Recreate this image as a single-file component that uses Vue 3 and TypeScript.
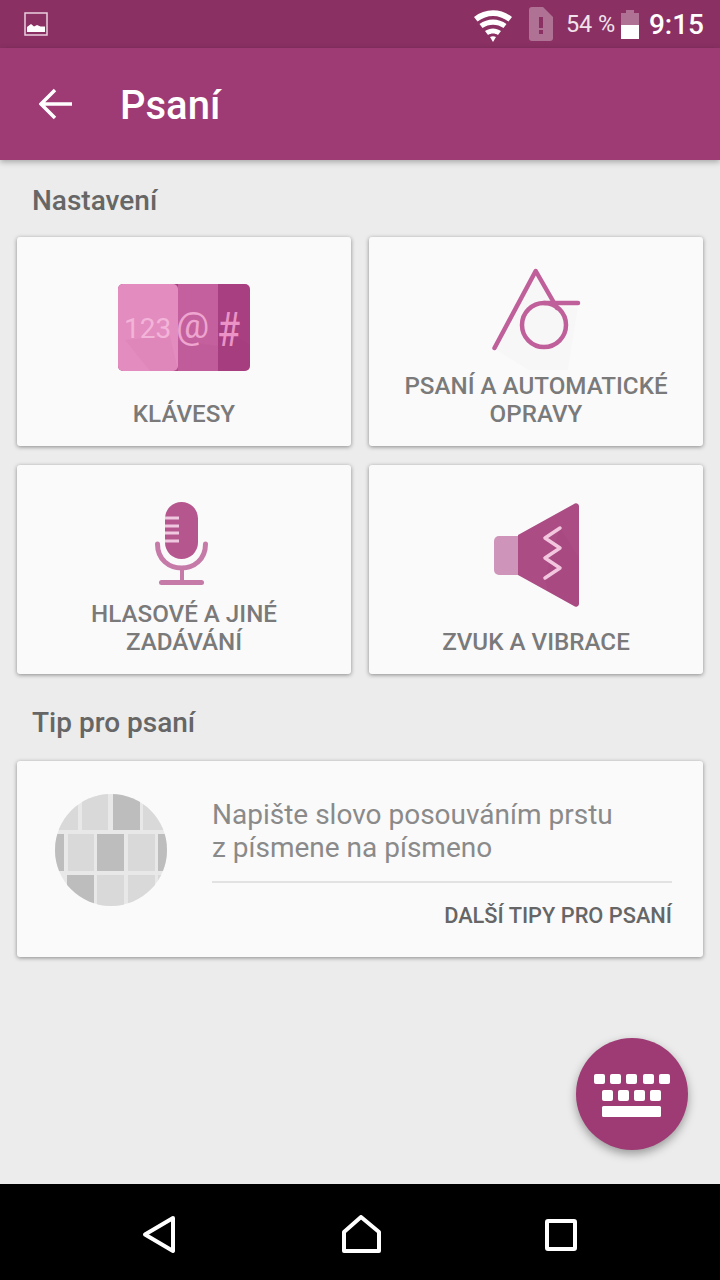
<script setup lang="ts">
const keyRow1 = [594, 610, 626, 643, 659]
const keyRow2 = [602, 618, 634, 650]
const micBars = [518, 526, 533, 541]

// tiles of the tip picture: x, y, width, height, dark
const tiles: [number, number, number, number, boolean][] = [
  [55, 793, 23, 37, false],
  [82, 793, 26, 37, false],
  [113, 793, 27, 37, true],
  [143, 793, 25, 37, false],
  [55, 834, 9, 37, true],
  [68, 834, 26, 37, false],
  [97, 834, 27, 37, true],
  [128, 834, 27, 37, false],
  [158, 834, 9, 37, true],
  [67, 875, 27, 31, true],
  [97, 875, 27, 31, false],
  [128, 875, 27, 31, false],
  [158, 875, 9, 31, false],
]
</script>

<template>
  <div class="screen">
    <div class="status-bar">
      <svg class="status-pic" viewBox="0 0 24 24">
        <rect x="1" y="1" width="22" height="22" fill="none" stroke="#e9cfdf" stroke-width="1.500" />
        <path d="M3 20v-5l4-3 3 2.500 3-1.500 3.500 1.500 4.500 0V20z" fill="#fff" />
      </svg>
      <span class="status-gap"></span>
      <svg class="status-wifi" viewBox="0 0 38 32">
        <path d="M0 7C11-2 27-2 38 7l-3.500 4.500C25 4 13 4 3.500 11.500z" fill="#fff" />
        <path d="M5.500 14c8-6 19-6 27 0l-3 4c-6-4.500-15-4.500-21 0z" fill="#fff" />
        <path d="M11 21c5-3.500 11-3.500 16 0l-3 4c-3-2-7-2-10 0z" fill="#fff" />
        <path d="M16 27c2-1 4-1 6 0L19 32z" fill="#fff" />
      </svg>
      <svg class="status-sim" viewBox="0 0 24 34">
        <path d="M3 0h11l10 10v21a3 3 0 0 1-3 3H3a3 3 0 0 1-3-3V3a3 3 0 0 1 3-3z" fill="#fff" fill-opacity="0.32" />
        <rect x="10" y="10" width="4" height="11" fill="#8a3063" />
        <rect x="10" y="23" width="4" height="4" fill="#8a3063" />
      </svg>
      <span class="status-pct">54 %</span>
      <svg class="status-battery" viewBox="0 0 18 29">
        <path d="M5 0h8v3h5v12H0V3h5z" fill="#fff" fill-opacity="0.32" />
        <rect y="15" width="18" height="14" fill="#fff" />
      </svg>
      <span class="status-time">9:15</span>
    </div>

    <header class="toolbar">
      <svg class="back" viewBox="0 0 34 32">
        <path d="M33 16H3M16 2L2 16l14 14" fill="none" stroke="#fff" stroke-width="3.500" />
      </svg>
      <h1>Psaní</h1>
    </header>

    <main class="content">
      <h2 class="first">Nastavení</h2>
      <div class="grid">
        <div class="card">
          <svg class="icon" viewBox="17 237 334 135">
            <rect x="118" y="284" width="132" height="87" rx="5" fill="#a83f80" />
            <path d="M178 284h40v87h-40z" fill="#c4609d" />
            <path d="M218 325l32 20v21a5 5 0 0 1-5 5h-27z" fill="#9a3574" fill-opacity="0.12" />
            <path d="M178 340l-36 0 32 31h44v-25z" fill="#b85292" fill-opacity="0.2" />
            <rect x="118" y="284" width="60" height="87" rx="5" fill="#e38cbf" />
            <path d="M125 340l45-4 8 35h-28z" fill="#c76aa6" fill-opacity="0.14" />
            <text x="124" y="338" class="k123">123</text>
            <text x="176" y="338" class="kat">@</text>
            <text x="217" y="346" class="khash" transform="translate(217 346) scale(0.78 1) translate(-217 -346)">#</text>
          </svg>
          <div class="label">KLÁVESY</div>
        </div>

        <div class="card">
          <svg class="icon" viewBox="369 237 334 135">
            <path d="M496 350l32 20h40l10-62-24-3-19-33z" fill="#000" fill-opacity="0.012" />
            <path d="M494.500 348L535.700 271 557 308" fill="none" stroke="#c0609b" stroke-width="4.500" stroke-linecap="round" stroke-linejoin="round" />
            <circle cx="544" cy="325" r="22" fill="none" stroke="#c0609b" stroke-width="4.500" />
            <path d="M544 303h34" fill="none" stroke="#c0609b" stroke-width="4.500" stroke-linecap="round" />
          </svg>
          <div class="label">PSANÍ A AUTOMATICKÉ<br />OPRAVY</div>
        </div>

        <div class="card">
          <svg class="icon" viewBox="17 465 334 135">
            <rect x="165" y="502" width="33" height="57" rx="16.500" fill="#b5568f" />
            <rect v-for="y in micBars" :key="y" x="165" :y="y - 1.500" width="14" height="3" fill="#f0c8df" />
            <path d="M157.500 544c0 32 48 32 48 0" fill="none" stroke="#c67aa8" stroke-width="5" stroke-linecap="round" />
            <rect x="180" y="568" width="4" height="14" fill="#c67aa8" />
            <rect x="159" y="580" width="45" height="5" rx="2.500" fill="#c67aa8" />
          </svg>
          <div class="label">HLASOVÉ A JINÉ<br />ZADÁVÁNÍ</div>
        </div>

        <div class="card">
          <svg class="icon" viewBox="369 465 334 135">
            <rect x="494" y="536" width="30" height="39" rx="5" fill="#cf94b9" />
            <path d="M518 535l56-31a3 3 0 0 1 5 2v98a3 3 0 0 1-5 2l-56-31z" fill="#ab4c85" />
            <path d="M560 528l19 30v46a3 3 0 0 1-5 2l-26-15-3-13z" fill="#8f2f6a" fill-opacity="0.1" />
            <path d="M560 528l-15 10 15 10-15 10 15 10-15 10" fill="none" stroke="#f2c6de" stroke-width="3.500" stroke-linecap="round" stroke-linejoin="round" />
          </svg>
          <div class="label">ZVUK A VIBRACE</div>
        </div>
      </div>

      <h2 class="second">Tip pro psaní</h2>
      <div class="card tip">
        <svg class="tip-pic" viewBox="55 794 112 112">
          <defs>
            <clipPath id="tipClip"><circle cx="111" cy="850" r="56" /></clipPath>
          </defs>
          <g clip-path="url(#tipClip)">
            <rect x="55" y="794" width="112" height="112" fill="#e8e8e8" />
            <rect
              v-for="(t, i) in tiles"
              :key="i"
              :x="t[0]"
              :y="t[1]"
              :width="t[2]"
              :height="t[3]"
              :fill="t[4] ? '#bdbdbd' : '#d9d9d9'"
            />
          </g>
        </svg>
        <div class="tip-body">
          <p>Napište slovo posouváním prstu<br />z písmene na písmeno</p>
          <div class="tip-more">DALŠÍ TIPY PRO PSANÍ</div>
        </div>
      </div>

      <div class="fab">
        <svg viewBox="576 1038 112 112">
          <rect v-for="x in keyRow1" :key="x" :x="x" y="1074" width="11" height="10" rx="2" fill="#fff" />
          <rect v-for="x in keyRow2" :key="x" :x="x" y="1090" width="11" height="11" rx="2" fill="#fff" />
          <rect x="602" y="1106" width="59" height="11" rx="1.500" fill="#fff" />
        </svg>
      </div>
    </main>

    <nav class="nav-bar">
      <svg class="nav-back" viewBox="0 0 36 40">
        <path d="M31 3L3 19.500 31 36z" fill="none" stroke="#fff" stroke-width="4" stroke-linejoin="round" />
      </svg>
      <svg class="nav-home" viewBox="0 0 40 38">
        <path d="M19 2L37 17v19H2V17z" fill="none" stroke="#fff" stroke-width="4" stroke-linejoin="round" />
      </svg>
      <svg class="nav-recent" viewBox="0 0 32 32">
        <rect x="2" y="2" width="28" height="28" rx="1" fill="none" stroke="#fff" stroke-width="4" />
      </svg>
    </nav>
  </div>
</template>

<style scoped>
.screen {
  width: 720px;
  height: 1280px;
  display: flex;
  flex-direction: column;
  background: #ececec;
  font-family: Roboto, "Liberation Sans", sans-serif;
  overflow: hidden;
}

.status-bar {
  height: 48px;
  flex: none;
  display: flex;
  align-items: center;
  padding: 0 16px 0 24px;
  background: #8a3063;
  color: #fff;
}

.status-pic {
  width: 24px;
  height: 24px;
}

.status-gap {
  flex: 1;
}

.status-wifi {
  width: 38px;
  height: 32px;
  margin: 4px 17px 0 0;
}

.status-sim {
  width: 24px;
  height: 34px;
  margin-right: 13px;
}

.status-pct {
  width: 55px;
  font-size: 23.500px;
  color: #f1e2eb;
}

.status-battery {
  width: 18px;
  height: 29px;
  margin-right: 10px;
}

.status-time {
  font-size: 28px;
  font-weight: 500;
}

.toolbar {
  height: 112px;
  flex: none;
  display: flex;
  align-items: center;
  padding: 0 0 0 39px;
  background: #9e3a74;
  box-shadow: 0 2px 6px rgba(0, 0, 0, 0.3);
  position: relative;
  z-index: 1;
  color: #fff;
}

.back {
  width: 34px;
  height: 32px;
}

.toolbar h1 {
  margin: 4px 0 0 47px;
  font-size: 40px;
  font-weight: 500;
  line-height: 108px;
}

.content {
  flex: 1;
  position: relative;
  padding: 0 17px;
}

h2 {
  margin: 0;
  padding-left: 15px;
  font-size: 28px;
  font-weight: 500;
  line-height: 32px;
  color: #666;
}

h2.first {
  padding-top: 25px;
  padding-bottom: 20px;
}

h2.second {
  padding-top: 33px;
  padding-bottom: 22px;
}

.grid {
  display: grid;
  grid-template-columns: 334px 334px;
  grid-auto-rows: 209px;
  column-gap: 18px;
  row-gap: 19px;
}

.card {
  display: flex;
  flex-direction: column;
  background: #fafafa;
  border-radius: 3px;
  box-shadow: 0 1px 4px rgba(0, 0, 0, 0.42);
}

.icon {
  width: 334px;
  height: 135px;
  overflow: visible;
  flex: none;
}

.label {
  margin-top: auto;
  padding-bottom: 18px;
  text-align: center;
  font-size: 24.200px;
  font-weight: 500;
  line-height: 28px;
  color: #7a7a7a;
}

.k123 {
  font-size: 28px;
  fill: #f3b4d9;
  font-family: Roboto, sans-serif;
}

.kat {
  font-size: 37px;
  fill: #eea5cf;
  font-family: Roboto, sans-serif;
}

.khash {
  font-size: 48px;
  fill: #eb93c6;
  font-family: Roboto, sans-serif;
}

.tip {
  flex-direction: row;
  height: 196px;
  padding: 33px 31px 0 38px;
  box-sizing: border-box;
}

.tip-pic {
  width: 112px;
  height: 112px;
  flex: none;
}

.tip-body {
  margin-left: 45px;
  flex: 1;
}

.tip-body p {
  margin: 4px 0 0;
  padding-bottom: 17px;
  border-bottom: 2px solid #e2e2e2;
  font-size: 28px;
  line-height: 33px;
  color: #8a8a8a;
}

.tip-more {
  margin-top: 19px;
  text-align: right;
  font-size: 21.800px;
  font-weight: 500;
  line-height: 28px;
  color: #666;
}

.fab {
  position: absolute;
  right: 32px;
  top: 878px;
  width: 112px;
  height: 112px;
  border-radius: 50%;
  background: #9e3a74;
  box-shadow: 0 4px 10px rgba(0, 0, 0, 0.35);
}

.fab svg {
  display: block;
  width: 112px;
  height: 112px;
}

.nav-bar {
  height: 96px;
  box-sizing: border-box;
  flex: none;
  position: relative;
  display: grid;
  grid-template-columns: 36px 40px 32px;
  justify-content: space-between;
  align-items: center;
  padding: 6px 143px 0 142px;
  background: #000;
}

.nav-back {
  width: 36px;
  height: 40px;
}

.nav-home {
  width: 40px;
  height: 38px;
  margin-top: -3px;
}

.nav-recent {
  width: 32px;
  height: 32px;
}
</style>

<style>
html,
body {
  margin: 0;
  background: #ececec;
}
</style>
